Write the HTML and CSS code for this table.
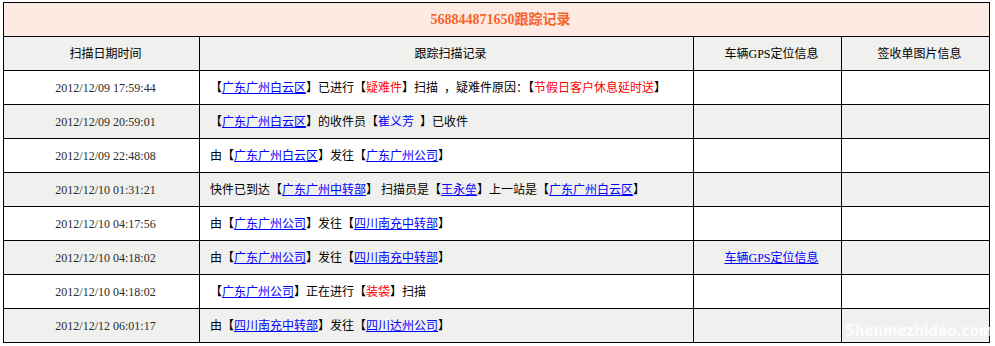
FILE: index.html
```html
<!DOCTYPE html>
<html lang="zh-CN">
<head>
<meta charset="utf-8">
<title>568844871650跟踪记录</title>
<link rel="stylesheet" href="styles.css">
</head>
<body>
<div class="wrap">
<table class="track">
  <colgroup>
    <col class="c-date"><col class="c-rec"><col class="c-gps"><col class="c-sign">
  </colgroup>
  <tr class="title-row"><td colspan="4" class="title">568844871650跟踪记录</td></tr>
  <tr class="head-row">
    <td class="center">扫描日期时间</td>
    <td class="center">跟踪扫描记录</td>
    <td class="center">车辆GPS定位信息</td>
    <td class="center">签收单图片信息</td>
  </tr>
  <tr>
    <td class="date">2012/12/09 17:59:44</td>
    <td class="rec">【<a href="#">广东广州白云区</a>】已进行【<span class="red">疑难件</span>】扫描&nbsp;&nbsp;，疑难件原因：【<span class="red">节假日客户休息延时送</span>】</td>
    <td></td><td></td>
  </tr>
  <tr class="alt">
    <td class="date">2012/12/09 20:59:01</td>
    <td class="rec">【<a href="#">广东广州白云区</a>】的收件员【<span class="blue">崔义芳</span>&nbsp; 】已收件</td>
    <td></td><td></td>
  </tr>
  <tr>
    <td class="date">2012/12/09 22:48:08</td>
    <td class="rec">由【<a href="#">广东广州白云区</a>】发往【<a href="#">广东广州公司</a>】</td>
    <td></td><td></td>
  </tr>
  <tr class="alt">
    <td class="date">2012/12/10 01:31:21</td>
    <td class="rec">快件已到达【<a href="#">广东广州中转部</a>】 扫描员是【<a href="#">王永垒</a>】上一站是【<a href="#">广东广州白云区</a>】</td>
    <td></td><td></td>
  </tr>
  <tr>
    <td class="date">2012/12/10 04:17:56</td>
    <td class="rec">由【<a href="#">广东广州公司</a>】发往【<a href="#">四川南充中转部</a>】</td>
    <td></td><td></td>
  </tr>
  <tr class="alt">
    <td class="date">2012/12/10 04:18:02</td>
    <td class="rec">由【<a href="#">广东广州公司</a>】发往【<a href="#">四川南充中转部</a>】</td>
    <td class="center"><a href="#">车辆GPS定位信息</a></td><td></td>
  </tr>
  <tr>
    <td class="date">2012/12/10 04:18:02</td>
    <td class="rec">【<a href="#">广东广州公司</a>】正在进行【<span class="red">装袋</span>】扫描</td>
    <td></td><td></td>
  </tr>
  <tr class="alt">
    <td class="date">2012/12/12 06:01:17</td>
    <td class="rec">由【<a href="#">四川南充中转部</a>】发往【<a href="#">四川达州公司</a>】</td>
    <td></td><td></td>
  </tr>
</table>
<div class="watermark">Shenmezhidao.com</div>
</div>
</body>
</html>
```

FILE: styles.css
```css
html, body {
  margin: 0;
  padding: 0;
  background: #ffffff;
}

.wrap {
  position: relative;
  width: 995px;
  height: 346px;
}

.track {
  margin: 2px 0 0 3px;
  width: 987px;
  border-collapse: collapse;
  table-layout: fixed;
  font-family: "Liberation Serif", "Noto Sans CJK SC", serif;
  font-size: 12px;
  color: #000;
}

.c-date { width: 196px; }
.c-rec { width: 494px; }
.c-gps { width: 148px; }
.c-sign { width: 148px; }

.track td {
  border: 1px solid #000;
  height: 33px;
  padding: 0 0 0 8px;
  vertical-align: middle;
  white-space: nowrap;
  line-height: 16px;
}

.title-row td {
  background: #fdebe3;
}

.title {
  text-align: center;
  font-size: 14px;
  font-weight: bold;
  color: #f6642c;
}

.head-row td {
  background: #f0f0ee;
}

.alt td {
  background: #f0f0ee;
}

.center {
  text-align: center;
}

.date {
  text-align: center;
  color: #2b2b2b;
}

.rec {
  text-align: left;
  padding-left: 10px !important;
}

.track a {
  color: #0000ff;
  text-decoration: underline;
}

.red {
  color: #ff0000;
}

.blue {
  color: #0000ff;
}

.watermark {
  position: absolute;
  left: 845px;
  top: 320px;
  font-family: "DejaVu Sans Condensed", "DejaVu Sans", sans-serif;
  font-weight: bold;
  font-size: 15px;
  letter-spacing: 0;
  color: rgba(255, 255, 255, 0.85);
}
```
